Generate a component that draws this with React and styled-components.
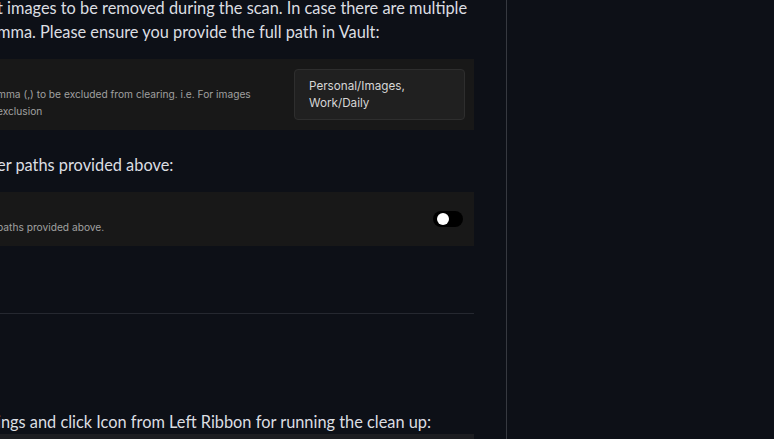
import React from "react";
import styled, { createGlobalStyle } from "styled-components";

const Global = createGlobalStyle`
  html, body { margin: 0; padding: 0; background: #0d1017; }
  body { overflow: hidden; }
`;

const Shell = styled.div`
  width: 774px;
  height: 439px;
  display: flex;
  overflow: hidden;
  background: #0d1017;
`;

const Pane = styled.div`
  width: 507px;
  flex: none;
  border-right: 1px solid #363940;
  padding: 0 32px 0 0;
  box-sizing: border-box;
  overflow: hidden;
`;

const Side = styled.div`
  flex: 1;
  background: #0d1017;
`;

const Column = styled.div`
  margin: -4px 0 0 -3px;
  display: flex;
  flex-direction: column;
`;

const Para = styled.div`
  font-family: Lato, "Noto Sans", sans-serif;
  font-size: 16.35px;
  line-height: 24px;
  color: #dcdee2;
  white-space: nowrap;
  margin: ${(p) => p.$m || "0"};
`;

const Card = styled.div`
  background: #181818;
  display: flex;
  align-items: center;
  justify-content: space-between;
  padding: 10px ${(p) => p.$pr || "9px"} 10px 0;
  margin: ${(p) => p.$m || "0"};
  height: ${(p) => p.$h || "auto"};
  box-sizing: border-box;
`;

const Info = styled.div`
  display: flex;
  flex-direction: column;
  font-family: Inter, "Noto Sans", sans-serif;
`;

const Name = styled.div`
  font-size: 13px;
  line-height: 17px;
  color: #dcdddf;
  height: 17px;
`;

const Desc = styled.div`
  font-size: 10.2px;
  line-height: 17px;
  color: #a0a0a0;
  white-space: nowrap;
`;

const TextArea = styled.div`
  width: 171px;
  height: 51px;
  box-sizing: border-box;
  background: #202020;
  border: 1px solid #2e2e2e;
  border-radius: 4px;
  padding: 8px 14px 6px;
  font-family: Inter, "Noto Sans", sans-serif;
  font-size: 11.7px;
  line-height: 17px;
  color: #d6d6d6;
`;

const Toggle = styled.div`
  width: 30px;
  height: 16px;
  border-radius: 8px;
  background: #000;
  position: relative;
  flex: none;
  &::after {
    content: "";
    position: absolute;
    left: 4px;
    top: 2px;
    width: 12px;
    height: 12px;
    border-radius: 50%;
    background: #fff;
  }
`;

const Divider = styled.div`
  height: 1px;
  background: #252830;
  margin: ${(p) => p.$m || "0"};
`;

const BottomCard = styled.div`
  height: 20px;
  background: #1c1d21;
`;

export default function App() {
  return (
    <>
      <Global />
      <Shell>
        <Pane>
          <Column>
            <Para $m="0 0 15px">
              t images to be removed during the scan. In case there are multiple
              <br />
              mma. Please ensure you provide the full path in Vault:
            </Para>
            <Card $m="0 0 23px" $h="71px">
              <Info>
                <Name />
                <Desc>mma (,) to be excluded from clearing. i.e. For images</Desc>
                <Desc>exclusion</Desc>
              </Info>
              <TextArea>
                Personal/Images,
                <br />
                Work/Daily
              </TextArea>
            </Card>
            <Para $m="0 0 15px">er paths provided above:</Para>
            <Card $pr="11px" $h="54px">
              <Info>
                <Name />
                <Desc>paths provided above.</Desc>
              </Info>
              <Toggle />
            </Card>
            <Divider $m="67px 0 96px" />
            <Para>ings and click Icon from Left Ribbon for running the clean up:</Para>
            <BottomCard />
          </Column>
        </Pane>
        <Side />
      </Shell>
    </>
  );
}
